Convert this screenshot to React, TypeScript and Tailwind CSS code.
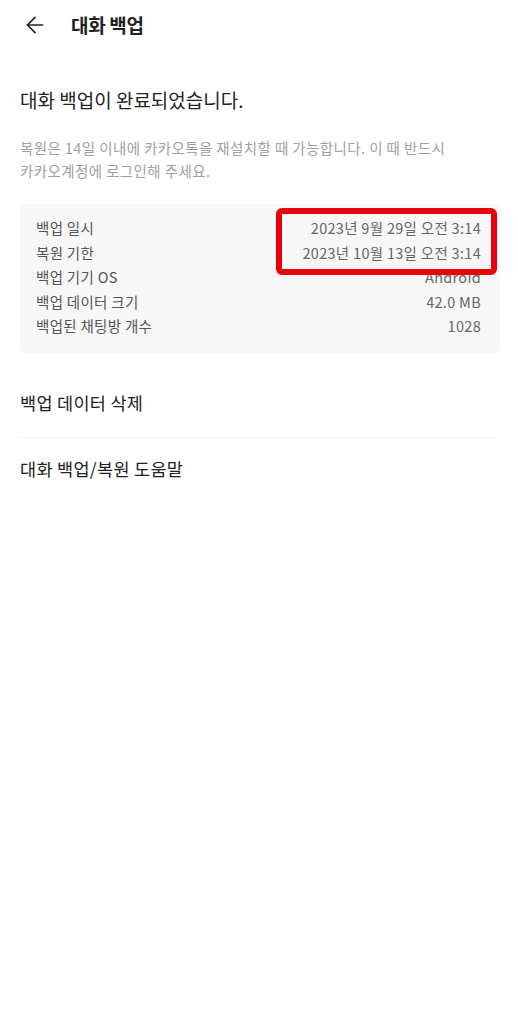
import { ArrowLeft } from "lucide-react"

const ROWS = [
  { label: "백업 일시", value: "2023년 9월 29일 오전 3:14" },
  { label: "복원 기한", value: "2023년 10월 13일 오전 3:14" },
  { label: "백업 기기 OS", value: "Android" },
  { label: "백업 데이터 크기", value: "42.0 MB" },
  { label: "백업된 채팅방 개수", value: "1028" },
]

export default function App() {
  return (
    <div
      className="min-h-screen w-full bg-white text-[#222]"
      style={{ fontFamily: '"Noto Sans CJK KR", "Noto Sans", sans-serif' }}
    >
      {/* Header */}
      <div className="h-[50px] flex items-center">
        <ArrowLeft size={26} strokeWidth={1.6} className="ml-[22px] text-[#222]" />
        <h1 className="ml-[23px] text-[19px] font-semibold tracking-[-0.3px]">대화 백업</h1>
      </div>

      <div className="px-[20px]">
        <h2 className="mt-[37px] text-[19px] leading-[26px] tracking-[0px]">대화 백업이 완료되었습니다.</h2>

        <p className="mt-[23px] text-[14.5px] leading-[23px] text-[#a0a0a0] tracking-[0.4px]">
          복원은 14일 이내에 카카오톡을 재설치할 때 가능합니다. 이 때 반드시
          <br />
          카카오계정에 로그인해 주세요.
        </p>

        {/* Info card */}
        <div className="relative mt-[22px] mr-[-2px] rounded-[6px] bg-[#f7f7f7] pl-[16px] pr-[19px] pt-[12px] pb-[14px]">
          {ROWS.map((row) => (
            <div key={row.label} className="flex h-[24.5px] items-center justify-between text-[14.5px] tracking-[0.3px]">
              <span className="text-[#555]">{row.label}</span>
              <span className="text-[#666]">{row.value}</span>
            </div>
          ))}
          <div className="absolute left-[256px] top-[4px] h-[67px] w-[221px] rounded-[6px] border-[6px] border-[#e8000b]" />
        </div>

        <div className="mt-[38px] h-[26px] flex items-center text-[17.5px] tracking-[0.3px]">백업 데이터 삭제</div>
        <div className="mt-[20px] h-px bg-[#f4f4f4]" />
        <div className="mt-[19px] h-[26px] flex items-center text-[17.5px] tracking-[0.3px]">대화 백업/복원 도움말</div>
      </div>
    </div>
  )
}
